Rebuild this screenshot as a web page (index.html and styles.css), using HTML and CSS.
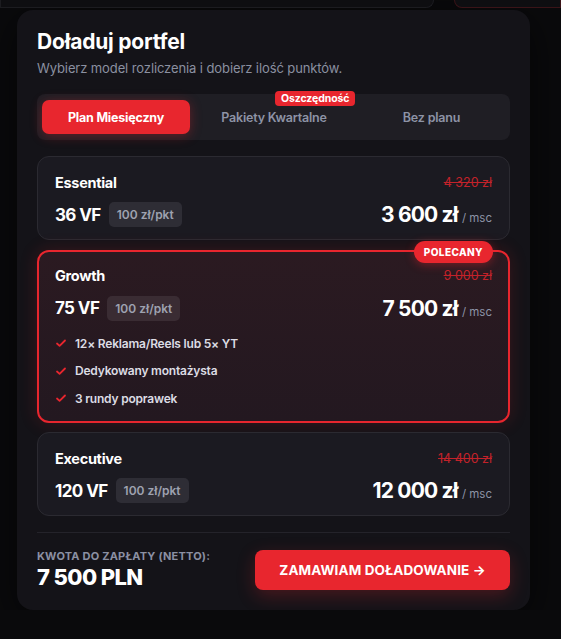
FILE: index.html
```html
<!DOCTYPE html>
<html lang="pl">
<head>
    <meta charset="UTF-8">
    <meta name="viewport" content="width=device-width, initial-scale=1.0">
    <title>Doładuj portfel</title>
    <link rel="stylesheet" href="styles.css">
</head>
<body>
    <div class="backdrop">
        <div class="bg-box"></div>
        <div class="bg-box bg-box-red"></div>
    </div>
    <div class="modal">
        <h1>Doładuj portfel</h1>
        <p class="subtitle">Wybierz model rozliczenia i dobierz ilość punktów.</p>

        <div class="tabs">
            <button class="tab active">Plan Miesięczny</button>
            <button class="tab">Pakiety Kwartalne<span class="tab-badge">Oszczędność</span></button>
            <button class="tab">Bez planu</button>
        </div>

        <div class="plans">
            <div class="plan">
                <div class="plan-row">
                    <span class="plan-name">Essential</span>
                    <span class="old-price">4 320 zł</span>
                </div>
                <div class="plan-row">
                    <div class="points">36 VF <span class="pill">100 zł/pkt</span></div>
                    <div class="price">3 600 zł <span class="per">/ msc</span></div>
                </div>
            </div>

            <div class="plan featured">
                <span class="featured-badge">POLECANY</span>
                <div class="plan-row">
                    <span class="plan-name">Growth</span>
                    <span class="old-price">9 000 zł</span>
                </div>
                <div class="plan-row">
                    <div class="points">75 VF <span class="pill">100 zł/pkt</span></div>
                    <div class="price">7 500 zł <span class="per">/ msc</span></div>
                </div>
                <ul class="features">
                    <li><svg viewBox="0 0 12 12"><path d="M2 6.5l2.6 2.4L10 3.5"/></svg>12× Reklama/Reels lub 5× YT</li>
                    <li><svg viewBox="0 0 12 12"><path d="M2 6.5l2.6 2.4L10 3.5"/></svg>Dedykowany montażysta</li>
                    <li><svg viewBox="0 0 12 12"><path d="M2 6.5l2.6 2.4L10 3.5"/></svg>3 rundy poprawek</li>
                </ul>
            </div>

            <div class="plan">
                <div class="plan-row">
                    <span class="plan-name">Executive</span>
                    <span class="old-price">14 400 zł</span>
                </div>
                <div class="plan-row">
                    <div class="points">120 VF <span class="pill">100 zł/pkt</span></div>
                    <div class="price">12 000 zł <span class="per">/ msc</span></div>
                </div>
            </div>
        </div>

        <div class="summary">
            <div>
                <div class="summary-label">KWOTA DO ZAPŁATY (NETTO):</div>
                <div class="summary-total">7 500 PLN</div>
            </div>
            <button class="order-btn">ZAMAWIAM DOŁADOWANIE →</button>
        </div>
    </div>
</body>
</html>
```

FILE: styles.css
```css
body {
    font-family: Inter, "Noto Sans", sans-serif;
    background-color: #0a0a0c;
    color: #fff;
    margin: 0;
    padding: 0;
}
.backdrop {
    display: flex;
    justify-content: space-between;
    height: 8px;
}
.bg-box {
    width: 432px;
    height: 7px;
    background-color: #0e0e11;
    border: 1px solid #1c1c20;
    border-top: none;
    border-radius: 0 0 10px 0;
}
.bg-box-red {
    width: 105px;
    border-color: #3a1418;
    border-radius: 0 0 0 10px;
}
.modal {
    width: 473px;
    margin: 2px 0 0 17px;
    padding: 20px;
    background-color: #141318;
    border-radius: 16px;
    box-shadow: 0 10px 40px rgba(0, 0, 0, 0.6);
}
h1 {
    margin: 0;
    font-size: 21px;
    font-weight: 700;
    letter-spacing: -0.2px;
    line-height: 24px;
}
.subtitle {
    margin: 6px 0 0;
    font-size: 13px;
    color: #8b90a0;
    letter-spacing: -0.1px;
}
.tabs {
    display: flex;
    margin-top: 18px;
    padding: 6px 5px;
    background-color: #1f1e24;
    border-radius: 8px;
}
.tab {
    position: relative;
    flex: 1;
    height: 34px;
    border: none;
    background: none;
    font-family: inherit;
    font-size: 12.5px;
    font-weight: 600;
    color: #8d93a6;
    border-radius: 7px;
    letter-spacing: -0.2px;
}
.tab.active {
    flex: 0 0 148px;
    background-color: #e8262e;
    color: #fff;
    font-weight: 700;
    box-shadow: 0 2px 12px rgba(232, 38, 46, 0.35);
}
.tab:nth-child(2) {
    flex: 0 0 168px;
}
.tab-badge {
    position: absolute;
    top: -9px;
    left: 85px;
    padding: 2px 6px;
    background-color: #e8262e;
    color: #fff;
    font-size: 10.5px;
    font-weight: 700;
    border-radius: 4px;
    line-height: 11px;
    letter-spacing: -0.1px;
}
.plans {
    display: flex;
    flex-direction: column;
    gap: 9.5px;
    margin-top: 16px;
}
.plan {
    position: relative;
    padding: 16px 17px 12px;
    background-color: #1b1a21;
    border: 1px solid #2b2a31;
    border-radius: 12px;
}
.plan.featured {
    border: 2px solid #e8262e;
    padding: 15px 16px 14px;
    background: linear-gradient(180deg, #2b1a21 0%, #231820 100%);
    box-shadow: 0 0 18px rgba(232, 38, 46, 0.18);
}
.featured-badge {
    position: absolute;
    top: -11px;
    right: 15px;
    padding: 5px 10px;
    background-color: #e8262e;
    color: #fff;
    font-size: 10px;
    font-weight: 800;
    letter-spacing: 0.4px;
    border-radius: 11px;
    line-height: 12px;
    box-shadow: 0 2px 10px rgba(232, 38, 46, 0.4);
}
.plan-row {
    display: flex;
    justify-content: space-between;
    align-items: center;
    height: 18px;
}
.plan-row + .plan-row {
    margin-top: 11px;
    height: 25px;
}
.plan-name {
    font-size: 14.5px;
    font-weight: 700;
    letter-spacing: -0.3px;
}
.old-price {
    font-size: 12.5px;
    color: #c2222a;
    text-decoration: line-through;
    letter-spacing: 0;
}
.points {
    display: flex;
    align-items: center;
    gap: 8px;
    font-size: 17px;
    font-weight: 700;
    letter-spacing: -0.6px;
}
.pill {
    padding: 0 8px;
    background-color: #2e2d35;
    color: #9ea2b0;
    font-size: 12px;
    font-weight: 600;
    line-height: 25px;
    border-radius: 5px;
    letter-spacing: 0;
}
.featured .pill {
    background-color: #3a2c33;
}
.price {
    font-size: 21px;
    font-weight: 700;
    letter-spacing: -0.8px;
    line-height: 25px;
}
.per {
    font-size: 11.5px;
    font-weight: 400;
    color: #8d93a6;
    letter-spacing: 0;
    line-height: 1;
}
.features {
    list-style: none;
    margin: 14px 0 0;
    padding: 0;
    display: flex;
    flex-direction: column;
    gap: 10.5px;
}
.features li {
    display: flex;
    align-items: center;
    gap: 8px;
    font-size: 12px;
    font-weight: 600;
    color: #dcdce4;
    letter-spacing: -0.2px;
    line-height: 17px;
}
.features svg {
    width: 12px;
    height: 12px;
    fill: none;
    stroke: #e8262e;
    stroke-width: 1.8;
    stroke-linecap: round;
    stroke-linejoin: round;
}
.summary {
    display: flex;
    justify-content: space-between;
    align-items: center;
    margin-top: 16px;
    padding-top: 16px;
    border-top: 1px solid #24232a;
}
.summary-label {
    font-size: 11px;
    font-weight: 700;
    color: #8b90a3;
    letter-spacing: 0.2px;
}
.summary-total {
    margin-top: 1px;
    font-size: 22px;
    font-weight: 800;
    letter-spacing: -0.6px;
    line-height: 26px;
}
.order-btn {
    width: 255px;
    height: 40px;
    border: none;
    border-radius: 8px;
    background-color: #e8262e;
    color: #fff;
    font-family: inherit;
    font-size: 13.5px;
    font-weight: 700;
    letter-spacing: 0.1px;
    box-shadow: 0 6px 18px rgba(232, 38, 46, 0.25);
}
```
